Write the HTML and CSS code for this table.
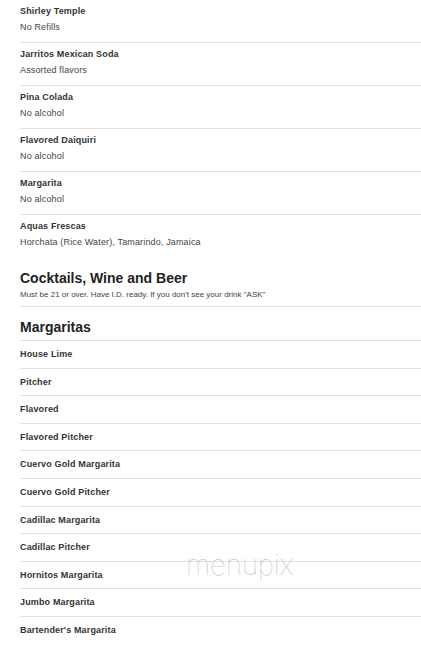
FILE: index.html
```html
<!DOCTYPE html>
<html>
<head>
<meta charset="utf-8">
<link rel="stylesheet" href="styles.css">
</head>
<body>
<div class="menu">
  <section class="section">
    <div class="item first"><div class="title">Shirley Temple</div><div class="desc">No Refills</div></div>
    <div class="item"><div class="title">Jarritos Mexican Soda</div><div class="desc">Assorted flavors</div></div>
    <div class="item"><div class="title">Pina Colada</div><div class="desc">No alcohol</div></div>
    <div class="item"><div class="title">Flavored Daiquiri</div><div class="desc">No alcohol</div></div>
    <div class="item"><div class="title">Margarita</div><div class="desc">No alcohol</div></div>
    <div class="item last"><div class="title">Aquas Frescas</div><div class="desc">Horchata (Rice Water), Tamarindo, Jamaica</div></div>
  </section>
  <section class="section">
    <div class="head">
      <h2 class="head-title">Cocktails, Wine and Beer</h2>
      <div class="head-desc">Must be 21 or over. Have I.D. ready. If you don't see your drink "ASK"</div>
    </div>
  </section>
  <section class="section">
    <div class="head">
      <h2 class="head-title">Margaritas</h2>
    </div>
    <div class="item single"><div class="title">House Lime</div></div>
    <div class="item single"><div class="title">Pitcher</div></div>
    <div class="item single"><div class="title">Flavored</div></div>
    <div class="item single"><div class="title">Flavored Pitcher</div></div>
    <div class="item single"><div class="title">Cuervo Gold Margarita</div></div>
    <div class="item single"><div class="title">Cuervo Gold Pitcher</div></div>
    <div class="item single"><div class="title">Cadillac Margarita</div></div>
    <div class="item single"><div class="title">Cadillac Pitcher</div></div>
    <div class="item single"><div class="title">Hornitos Margarita</div></div>
    <div class="item single"><div class="title">Jumbo Margarita</div></div>
    <div class="item single"><div class="title">Bartender's Margarita</div></div>
  </section>
  <div class="watermark">menupix</div>
</div>
</body>
</html>
```

FILE: styles.css
```css
html, body {
  margin: 0;
  padding: 0;
  background: #fff;
}
body {
  font-family: "Liberation Sans", Arial, sans-serif;
  color: #333;
  overflow: hidden;
}
.menu {
  position: relative;
  padding-left: 20px;
}
.section {
  display: flex;
  flex-direction: column;
}
.item {
  border-top: 1px solid #e2e2e2;
  padding: 4px 0 8px;
}
.item.first {
  border-top: none;
}
.item.single {
  padding: 6px 0 6.6px;
}
.title {
  font-size: 9px;
  line-height: 14px;
  font-weight: bold;
  letter-spacing: 0.15px;
  color: #333;
}
.desc {
  font-size: 9px;
  line-height: 14px;
  margin-top: 2px;
  letter-spacing: 0.15px;
  color: #444;
}
.head {
  padding: 11.5px 0 4px;
  border-bottom: 1px solid #e2e2e2;
}
.head + .item {
  border-top: none;
}
.head-title {
  margin: 0;
  font-size: 14px;
  line-height: 18px;
  font-weight: bold;
  color: #222;
}
.head-desc {
  font-size: 8px;
  line-height: 12px;
  margin-top: 2px;
  padding-bottom: 1px;
  color: #444;
}
.watermark {
  position: absolute;
  left: 186px;
  top: 550px;
  font-family: Inter, "DejaVu Sans", sans-serif;
  font-weight: 100;
  font-size: 28px;
  line-height: 30px;
  letter-spacing: -0.3px;
  color: #c8c8c8;
}
```
